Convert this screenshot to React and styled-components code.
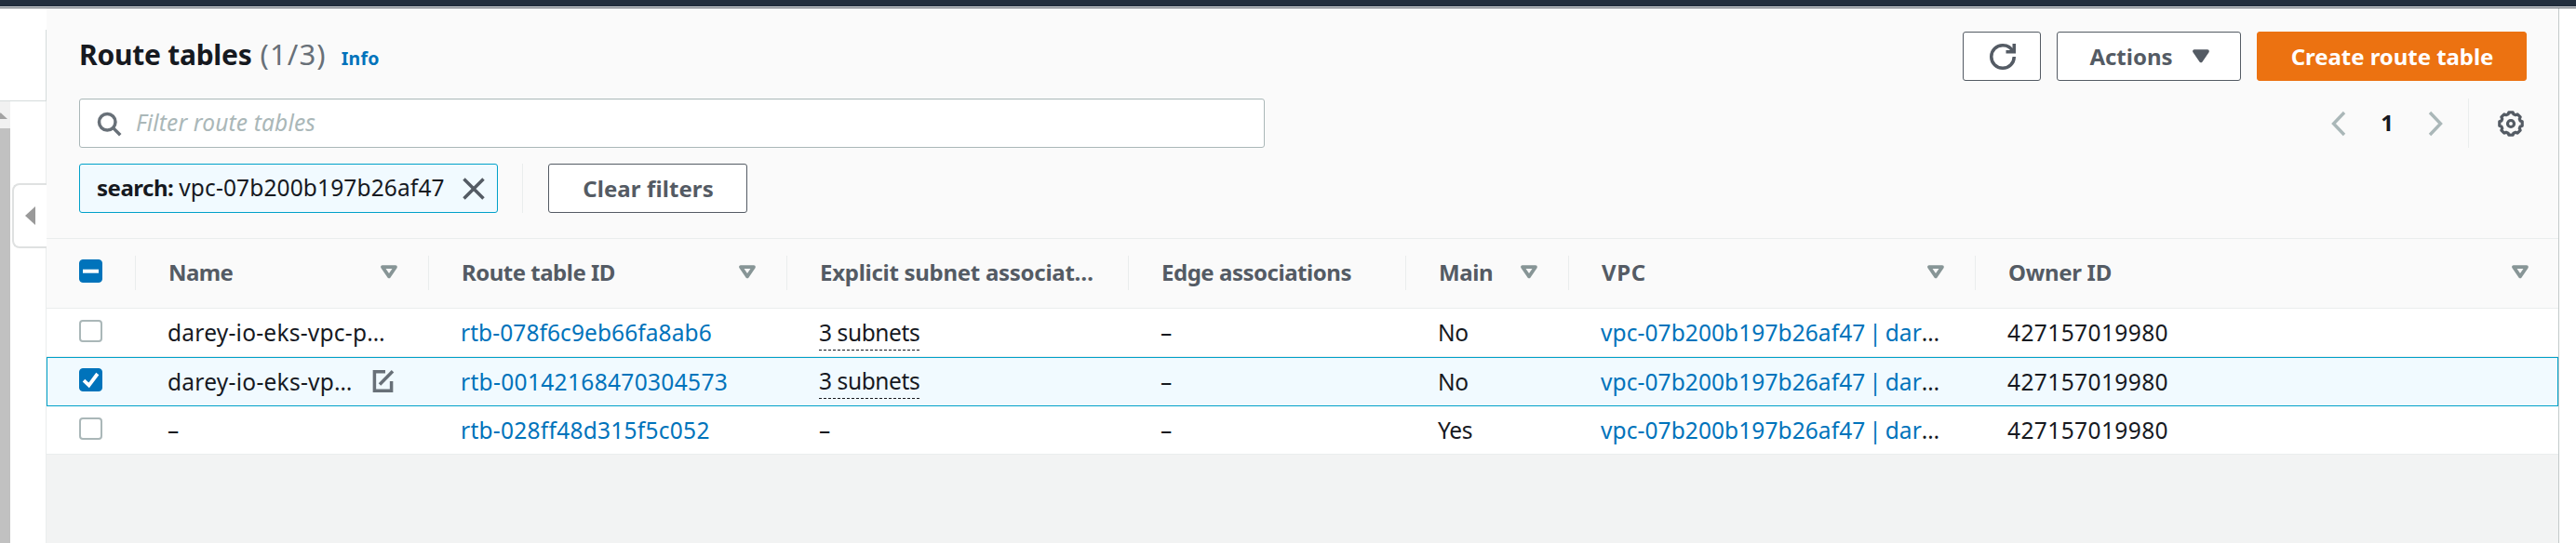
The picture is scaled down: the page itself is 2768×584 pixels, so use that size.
import React from "react";
import styled, { createGlobalStyle, css } from "styled-components";

const GlobalStyle = createGlobalStyle`
  *, *::before, *::after { box-sizing: border-box; }
  body {
    margin: 0;
    background: #fff;
    color: #16191f;
    font-family: "Noto Sans", "Open Sans", sans-serif;
    font-size: 24.5px;
    overflow: hidden;
  }
  svg { display: block; flex: none; }
`;

const Page = styled.div`
  display: flex;
  flex-direction: column;
  width: 2768px;
  height: 584px;
  overflow: hidden;
`;

const TopBar = styled.header`
  flex: none;
  height: 9px;
  background: #fff;
  border-top: 7px solid #232f3e;
  border-bottom: 1px solid #545b64;
`;

const Main = styled.main`
  flex: 1;
  display: flex;
  min-height: 0;
`;

/* Left navigation strip */
const Sidebar = styled.aside`
  flex: none;
  width: 50px;
  display: flex;
  flex-direction: column;
`;

const SidebarHead = styled.div`
  height: 100px;
  padding-top: 23px;
  border-bottom: 1px solid #d5dbdb;
`;

const SidebarHeadEdge = styled.div`
  height: 100%;
  border-right: 1px solid #d5dbdb;
`;

const SidebarBody = styled.div`
  flex: 1;
  display: flex;
`;

const Scrollbar = styled.div`
  width: 11px;
  display: flex;
  flex-direction: column;
  background: #f1f1f1;
`;

const ScrollUp = styled.div`
  height: 29px;
  padding-top: 12px;
`;

const ScrollThumb = styled.div`
  flex: 1;
  background: #c1c1c1;
`;

const SidebarRail = styled.div`
  flex: 1;
  display: flex;
  flex-direction: column;
  align-items: flex-end;
`;

const RailEdge = styled.div`
  width: 1px;
  height: ${(p) => (p.$fill ? "auto" : "88px")};
  flex: ${(p) => (p.$fill ? 1 : "none")};
  background: #eaeded;
`;

const CollapseTab = styled.button`
  display: flex;
  align-items: center;
  width: 37px;
  height: 70px;
  padding: 0 0 0 12px;
  background: #fff;
  border: 2px solid #dfe1e1;
  border-right: 0;
  border-radius: 8px 0 0 8px;
`;

/* Content panel */
const Panel = styled.section`
  flex: 1;
  display: flex;
  flex-direction: column;
  min-width: 0;
  background: #f2f3f3;
`;

const Gutter = styled.div`
  flex: none;
  width: 19px;
  border-left: 1px solid #c3caca;
  background: #fff;
`;

const PanelHeader = styled.div`
  flex: none;
  height: 248px;
  padding: 25px 34px 0 35px;
  background: #fafafa;
  border-bottom: 1px solid #eaeded;
`;

const Bar = styled.div`
  display: flex;
  align-items: center;
  justify-content: ${(p) => (p.$spread ? "space-between" : "flex-start")};
  height: 53px;
  margin-bottom: ${(p) => p.$after || 0}px;
`;

const Heading = styled.div`
  display: flex;
  align-items: baseline;
  line-height: 42px;
`;

const Title = styled.h1`
  margin: 0;
  font-size: 30px;
  font-weight: 700;
  letter-spacing: -0.25px;
`;

const Count = styled.span`
  margin-left: 9px;
  color: #687078;
  font-size: 31px;
  letter-spacing: 1.1px;
`;

const InfoLink = styled.a`
  margin-left: 16px;
  color: #0073bb;
  font-size: 19.5px;
  font-weight: 700;
  letter-spacing: 0.3px;
`;

const ButtonGroup = styled.div`
  display: flex;
  gap: 17px;
`;

const Button = styled.button`
  display: flex;
  align-items: center;
  justify-content: center;
  gap: 21px;
  width: ${(p) => p.$w}px;
  height: 53px;
  padding: 0 0 ${(p) => (p.$icon ? 0 : 1)}px 1px;
  font: 700 24px "Noto Sans", sans-serif;
  letter-spacing: ${(p) => p.$ls || 0}px;
  border-radius: 3px;
  ${(p) =>
    p.$primary
      ? css`
          color: #fff;
          background: #ec7211;
          border: 1px solid #ec7211;
        `
      : css`
          color: #545b64;
          background: #fff;
          border: 1px solid #545b64;
        `}
`;

const SearchBox = styled.div`
  display: flex;
  align-items: center;
  gap: 15px;
  width: 1274px;
  height: 53px;
  padding: 0 17px;
  background: #fff;
  border: 1px solid #aab7b8;
  border-radius: 3px;
`;

const Placeholder = styled.span`
  padding-bottom: 2px;
  color: #aab7b8;
  font-style: italic;
  letter-spacing: 0.15px;
`;

const Pager = styled.nav`
  display: flex;
  align-items: center;
  height: 53px;
  padding-right: 3px;
`;

const PageNumber = styled.span`
  margin: 0 37px 2px;
  font-size: 24px;
  font-weight: 700;
`;

const Divider = styled.span`
  width: 1px;
  height: 53px;
  margin: 0 ${(p) => p.$after}px 0 ${(p) => p.$before}px;
  background: #eaeded;
`;

const Token = styled.div`
  display: flex;
  align-items: center;
  width: 450px;
  height: 53px;
  padding-left: 18px;
  background: #f1faff;
  border: 1px solid #00a1c9;
  border-radius: 3px;
`;

const TokenKey = styled.b`
  padding-bottom: 2px;
  margin-right: 6px;
  font-size: 24px;
  letter-spacing: -0.5px;
`;

const TokenValue = styled.span`
  flex: 1;
  padding-bottom: 2px;
  letter-spacing: 0.13px;
`;

const TokenDismiss = styled.span`
  padding-right: 11px;
`;

/* Table */
const columns = css`
  display: grid;
  grid-template-columns: 96px 315px 385px 367px 298px 175px 437px 1fr;
`;

const HeadRow = styled.div`
  ${columns}
  flex: none;
  height: 75px;
  align-items: start;
  padding-top: 18px;
  background: #fafafa;
  border-bottom: 1px solid #eaeded;
`;

const HeadCell = styled.div`
  display: flex;
  align-items: center;
  justify-content: space-between;
  height: 37px;
  padding: 0 ${(p) => (p.$last ? 32 : 33)}px 2px 35px;
  border-right: ${(p) => (p.$last ? 0 : 1)}px solid #eaeded;
  color: #545b64;
  font-size: 24px;
  font-weight: 700;
  letter-spacing: ${(p) => p.$ls ?? -0.4}px;
  white-space: nowrap;
`;

const Row = styled.div`
  ${columns}
  flex: none;
  height: ${(p) => (p.$selected ? 53 : 52)}px;
  align-items: center;
  background: ${(p) => (p.$selected ? "#f1faff" : "#fff")};
  border-bottom: 1px solid #eaeded;
  ${(p) =>
    p.$selected &&
    css`
      border-bottom-color: #00a1c9;
      box-shadow: inset 1px 1px #00a1c9, inset -1px 0 #00a1c9;
    `}
`;

const Cell = styled.div`
  display: flex;
  align-items: center;
  min-width: 0;
  padding-left: 34px;
  line-height: 37px;
  letter-spacing: ${(p) => p.$ls || 0}px;
  white-space: pre;
`;

const CheckCell = styled.div`
  padding: 0 0 3px 35px;
  border-right: ${(p) => (p.$head ? 1 : 0)}px solid #eaeded;
  height: ${(p) => (p.$head ? "37px" : "auto")};
  padding-top: ${(p) => (p.$head ? 4 : 0)}px;
`;

const Checkbox = styled.span`
  display: block;
  width: 25px;
  height: ${(p) => (p.$on ? 25 : 24)}px;
  border: ${(p) => (p.$on ? "1px solid #0073bb" : "2px solid #aab7b8")};
  border-radius: 4px;
  background: ${(p) => (p.$on ? "#0073bb" : "#fff")};
`;

const NameText = styled.span`
  width: ${(p) => (p.$editable ? "220px" : "auto")};
`;

const Link = styled.a`
  color: #0073bb;
  word-spacing: ${(p) => p.$ws || 0}px;
`;

const Popover = styled.span`
  border-bottom: 1px dashed #16191f;
`;

/* Icons */
const SortIcon = ({ filled }) => (
  <svg width="18" height="15" viewBox="0 0 18 15">
    <path
      d="M2 2.1h14L9 12.4z"
      fill={filled ? "#545b64" : "none"}
      stroke={filled ? "#545b64" : "#879596"}
      strokeWidth="3.7"
      strokeLinejoin="round"
    />
  </svg>
);

const RefreshIcon = () => (
  <svg width="28" height="28" viewBox="0 0 16 16" fill="none" stroke="#545b64" strokeWidth="2">
    <path d="M10 5h5V0" />
    <path d="M15 8a6.957 6.957 0 0 1-7 7 6.957 6.957 0 0 1-7-7 6.957 6.957 0 0 1 7-7 6.87 6.87 0 0 1 6.3 4" />
  </svg>
);

const SearchIcon = () => (
  <svg width="28" height="28" viewBox="0 0 16 16" fill="none" stroke="#687078" strokeWidth="2">
    <circle cx="7" cy="7" r="5" />
    <path d="M15 15l-4.5-4.5" />
  </svg>
);

const CloseIcon = () => (
  <svg width="28" height="28" viewBox="0 0 16 16" fill="none" stroke="#545b64" strokeWidth="2">
    <path d="M2 2l12 12M14 2L2 14" />
  </svg>
);

const Chevron = ({ right }) => (
  <svg width="16" height="28" viewBox="0 0 16 28" fill="none" stroke="#aab7b8" strokeWidth="3.4">
    <path d={right ? "M2 2l11.5 12L2 26" : "M14 2L2.5 14 14 26"} />
  </svg>
);

const gearPath = (() => {
  const points = [];
  for (let tooth = 0; tooth < 8; tooth += 1) {
    [[-10, 12.4], [10, 12.4], [16, 10.6], [29, 10.6]].forEach(([offset, radius]) => {
      const angle = ((tooth * 45 + offset - 90) * Math.PI) / 180;
      points.push(`${(14 + radius * Math.cos(angle)).toFixed(2)} ${(14 + radius * Math.sin(angle)).toFixed(2)}`);
    });
  }
  return `M${points.join("L")}Z`;
})();

const GearIcon = () => (
  <svg width="28" height="28" viewBox="0 0 28 28" fill="none" stroke="#545b64" strokeWidth="3.2">
    <path d={gearPath} strokeLinejoin="round" />
    <circle cx="14" cy="14" r="3.5" />
  </svg>
);

const EditIcon = () => (
  <svg width="24" height="26" viewBox="0 0 24 26" fill="none" stroke="#687078" strokeWidth="3.5">
    <path d="M14 2.7H2.4v20.6h18.2V13" />
    <path d="M8 16.5L22 2.2" />
  </svg>
);

const CheckMark = () => (
  <svg width="23" height="23" viewBox="0 0 23 23" fill="none" stroke="#fff" strokeWidth="3.8">
    <path d="M4 12.2l5.6 5.3L18.8 5" />
  </svg>
);

const MinusMark = () => (
  <svg width="23" height="23" viewBox="0 0 23 23" fill="none" stroke="#fff" strokeWidth="4">
    <path d="M3 11.7h17" />
  </svg>
);

const LeftTriangle = () => (
  <svg width="11" height="20" viewBox="0 0 11 20">
    <path d="M11 0v20L0 10z" fill="#999" />
  </svg>
);

const UpTriangle = () => (
  <svg width="8" height="7" viewBox="0 0 8 7">
    <path d="M0 0.5h1L8 7H0z" fill="#a3a3a3" />
  </svg>
);

const headings = [
  { label: "Name", sort: true, ls: -0.6 },
  { label: "Route table ID", sort: true, ls: -0.5 },
  { label: "Explicit subnet associat…", ls: -0.28 },
  { label: "Edge associations", ls: -0.47 },
  { label: "Main", sort: true },
  { label: "VPC", sort: true, ls: 0.6 },
  { label: "Owner ID", sort: true, ls: -0.3 },
];

const rows = [
  { name: "darey-io-eks-vpc-p…", nameLs: 0.24, id: "rtb-078f6c9eb66fa8ab6", idLs: 0.08, subnets: "3 subnets", main: "No" },
  { name: "darey-io-eks-vp…", nameLs: 0.26, id: "rtb-00142168470304573", idLs: 0.33, subnets: "3 subnets", main: "No", selected: true },
  { name: "–", nameLs: 0, id: "rtb-028ff48d315f5c052", idLs: 0.26, main: "Yes" },
];

export default function App() {
  return (
    <>
      <GlobalStyle />
      <Page>
        <TopBar />
        <Main>
          <Sidebar>
            <SidebarHead>
              <SidebarHeadEdge />
            </SidebarHead>
            <SidebarBody>
              <Scrollbar>
                <ScrollUp>
                  <UpTriangle />
                </ScrollUp>
                <ScrollThumb />
              </Scrollbar>
              <SidebarRail>
                <RailEdge />
                <CollapseTab aria-label="Collapse">
                  <LeftTriangle />
                </CollapseTab>
                <RailEdge $fill />
              </SidebarRail>
            </SidebarBody>
          </Sidebar>

          <Panel>
            <PanelHeader>
              <Bar $spread $after={19}>
                <Heading>
                  <Title>Route tables</Title>
                  <Count>(1/3)</Count>
                  <InfoLink>Info</InfoLink>
                </Heading>
                <ButtonGroup>
                  <Button $w={84} $icon aria-label="Refresh">
                    <RefreshIcon />
                  </Button>
                  <Button $w={198}>
                    Actions
                    <SortIcon filled />
                  </Button>
                  <Button $w={290} $primary $ls={-0.05}>
                    Create route table
                  </Button>
                </ButtonGroup>
              </Bar>
              <Bar $spread $after={17}>
                <SearchBox>
                  <SearchIcon />
                  <Placeholder>Filter route tables</Placeholder>
                </SearchBox>
                <Pager>
                  <Chevron />
                  <PageNumber>1</PageNumber>
                  <Chevron right />
                  <Divider $before={27} $after={31} />
                  <GearIcon />
                </Pager>
              </Bar>
              <Bar>
                <Token>
                  <TokenKey>search:</TokenKey>
                  <TokenValue>vpc-07b200b197b26af47</TokenValue>
                  <TokenDismiss>
                    <CloseIcon />
                  </TokenDismiss>
                </Token>
                <Divider $before={26} $after={27} />
                <Button $w={214} $ls={0.1}>
                  Clear filters
                </Button>
              </Bar>
            </PanelHeader>

            <HeadRow>
              <CheckCell $head>
                <Checkbox $on>
                  <MinusMark />
                </Checkbox>
              </CheckCell>
              {headings.map((h, i) => (
                <HeadCell key={h.label} $ls={h.ls} $last={i === headings.length - 1}>
                  {h.label}
                  {h.sort && <SortIcon />}
                </HeadCell>
              ))}
            </HeadRow>

            {rows.map((r) => (
              <Row key={r.id} $selected={r.selected}>
                <CheckCell>
                  <Checkbox $on={r.selected}>{r.selected && <CheckMark />}</Checkbox>
                </CheckCell>
                <Cell $ls={r.nameLs}>
                  <NameText $editable={r.selected}>{r.name}</NameText>
                  {r.selected && <EditIcon />}
                </Cell>
                <Cell $ls={r.idLs}>
                  <Link>{r.id}</Link>
                </Cell>
                <Cell $ls={r.subnets ? -0.4 : 0}>{r.subnets ? <Popover>{r.subnets}</Popover> : "–"}</Cell>
                <Cell>–</Cell>
                <Cell $ls={-0.3}>{r.main}</Cell>
                <Cell $ls={0.08}>
                  <Link $ws={-2.6}>vpc-07b200b197b26af47 | dar</Link>…
                </Cell>
                <Cell $ls={0.4}>427157019980</Cell>
              </Row>
            ))}
          </Panel>
          <Gutter />
        </Main>
      </Page>
    </>
  );
}
